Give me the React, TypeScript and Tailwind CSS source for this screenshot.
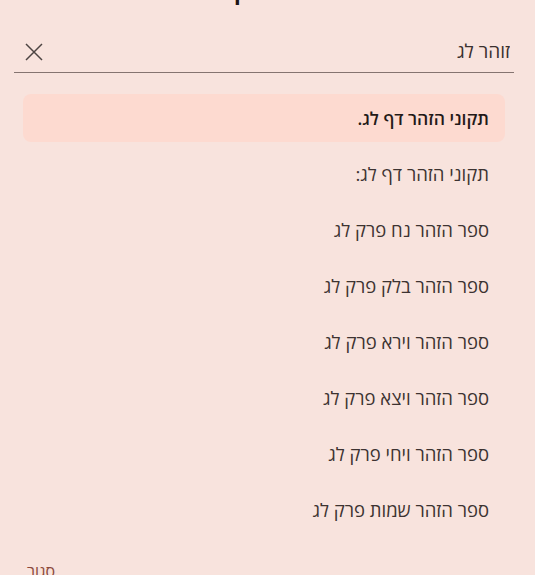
const results = [
  'תקוני הזהר דף לג.',
  'תקוני הזהר דף לג:',
  'ספר הזהר נח פרק לג',
  'ספר הזהר בלק פרק לג',
  'ספר הזהר וירא פרק לג',
  'ספר הזהר ויצא פרק לג',
  'ספר הזהר ויחי פרק לג',
  'ספר הזהר שמות פרק לג',
];

export default function App() {
  return (
    <div
      dir="rtl"
      className="w-[535px] h-[575px] overflow-hidden bg-[#f8e3dd] text-[#3d3331]"
      style={{ fontFamily: '"Open Sans", "Noto Sans", sans-serif' }}
    >
      {/* clipped title, only the descender shows */}
      <div className="h-[7px] overflow-hidden flex items-start justify-start pr-[287px]">
        <span className="text-[22px] leading-none font-bold text-[#1c1514] -mt-[20px]">ק</span>
      </div>

      <div className="ml-[14px] mr-[21px] mt-[23px] h-[43px] flex items-center justify-between border-b border-[#857470]">
        <input
          readOnly
          value="זוהר לג"
          className="bg-transparent outline-none text-[19px] text-[#3a302e] w-[400px] pr-[4px]"
        />
        <button className="ml-[11px] mt-[1px] text-[#4d4442]">
          <svg width="18" height="18" viewBox="0 0 18 18" fill="none" stroke="currentColor" strokeWidth="1.5">
            <path d="M1 1 L17 17 M17 1 L1 17" />
          </svg>
        </button>
      </div>

      <ul className="mt-[21px] mr-[30px] ml-[23px] flex flex-col gap-2">
        {results.map((r, i) => (
          <li
            key={r}
            className={
              'h-12 flex items-center pr-4 rounded-lg ' +
              (i === 0 ? 'bg-[#fddad0] text-[17.5px] font-semibold text-[#231918]' : 'text-[18.5px]')
            }
          >
            {r}
          </li>
        ))}
      </ul>

      <div className="mt-[29px] flex justify-end pl-[27px]">
        <button className="text-[16px] leading-none font-medium text-[#8c4a3c]">סגור</button>
      </div>
    </div>
  );
}
